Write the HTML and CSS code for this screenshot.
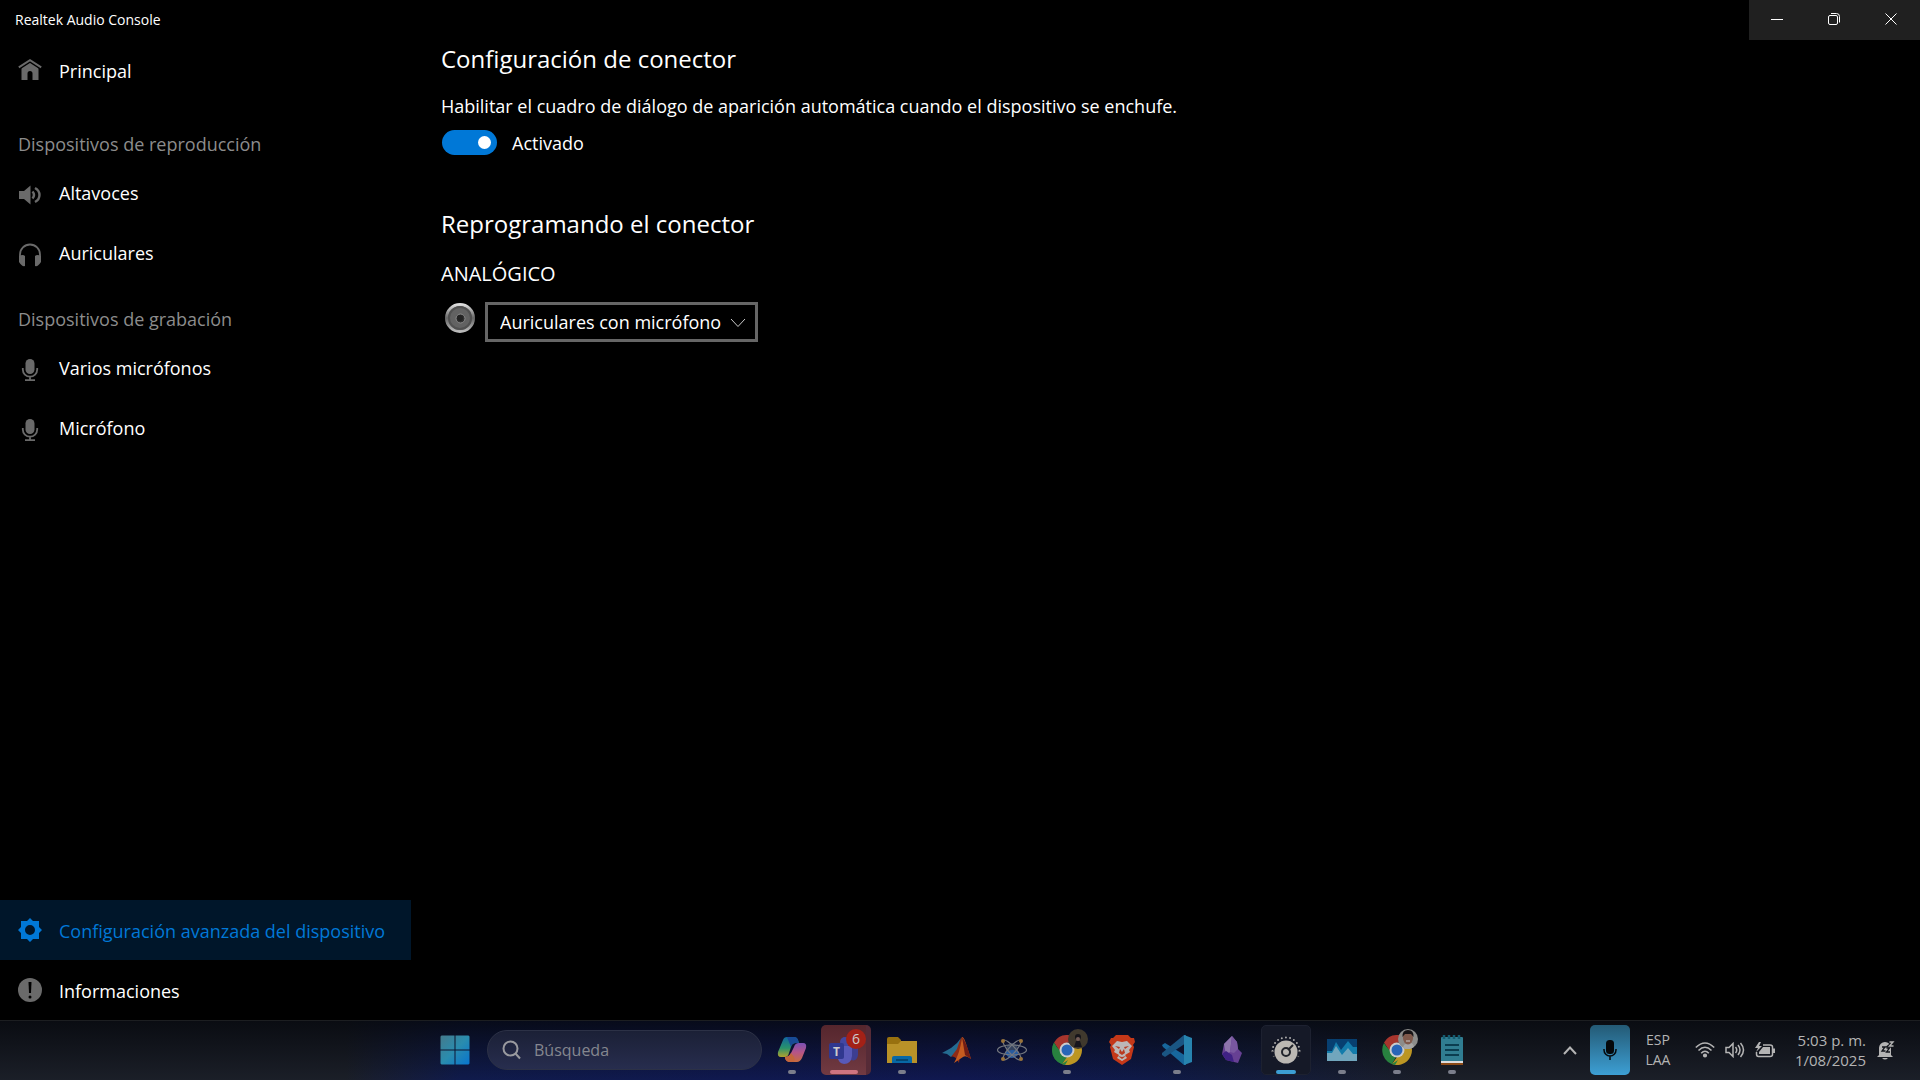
FILE: index.html
```html
<!DOCTYPE html>
<html lang="es">
<head>
<meta charset="utf-8">
<title>Realtek Audio Console</title>
<link rel="stylesheet" href="styles.css">
</head>
<body>
<div class="app">
  <header class="titlebar">
    <span class="titlebar-name">Realtek Audio Console</span>
    <div class="window-buttons">
      <button class="window-button" aria-label="Minimizar"><svg width="12" height="12" viewBox="0 0 12 12"><path d="M0 6.5H12" /></svg></button>
      <button class="window-button" aria-label="Restaurar"><svg width="12" height="12" viewBox="0 0 12 12"><rect x=".5" y="2.5" width="9" height="9" rx="1.5"/><path d="M3 .5H8.5A3 3 0 0 1 11.500 3.500V9.500"/></svg></button>
      <button class="window-button" aria-label="Cerrar"><svg width="12" height="12" viewBox="0 0 12 12"><path d="M.5 .5L11.500 11.500M11.500 .5L.5 11.500"/></svg></button>
    </div>
  </header>

  <div class="body">
    <nav class="sidebar">
      <a class="nav-item" href="#principal">
        <svg class="nav-icon" viewBox="0 0 24 24"><path d="M12 3.500L3.500 9.500V22H9.500V15.500A2.500 2.500 0 0 1 14.500 15.500V22H20.500V9.500Z" fill="currentColor"/><path d="M.8 9.800L12 2.500L23.200 9.800" fill="none" stroke="#000" stroke-width="4"/><path d="M.8 9.300L12 2.200L23.200 9.300" fill="none" stroke="currentColor" stroke-width="2"/></svg>
        <span>Principal</span>
      </a>
      <h2 class="nav-heading nav-heading-first">Dispositivos de reproducción</h2>
      <div class="devices">
        <a class="nav-item" href="#altavoces">
          <svg class="nav-icon" viewBox="0 0 24 24"><path d="M1 8H6L12.500 2.500V21.500L6 16H1Z" fill="currentColor"/><path d="M14.500 8.500Q17.500 12 14.500 15.500M17 5Q21.500 7.500 21.500 12T17 19" fill="none" stroke="currentColor" stroke-width="2.400"/></svg>
          <span>Altavoces</span>
        </a>
        <a class="nav-item" href="#auriculares">
          <svg class="nav-icon" viewBox="0 0 24 24"><path d="M2 18V11.500A10 10 0 0 1 22 11.500V18" fill="none" stroke="currentColor" stroke-width="1.800"/><path d="M1 13Q5 11 7 13V23Q4 24 1 19ZM23 13Q19 11 17 13V23Q20 24 23 19Z" fill="currentColor"/></svg>
          <span>Auriculares</span>
        </a>
      </div>
      <h2 class="nav-heading">Dispositivos de grabación</h2>
      <div class="devices">
        <a class="nav-item" href="#varios">
          <svg class="nav-icon" viewBox="0 0 24 24"><rect x="7.500" y="1" width="9" height="15" rx="4.500" fill="currentColor"/><path d="M4.800 10V11.500A7.200 7.200 0 0 0 19.200 11.500V10M12 18.500V22M7 22.200H17" fill="none" stroke="currentColor" stroke-width="1.800"/></svg>
          <span>Varios micrófonos</span>
        </a>
        <a class="nav-item" href="#microfono">
          <svg class="nav-icon" viewBox="0 0 24 24"><rect x="7.500" y="1" width="9" height="15" rx="4.500" fill="currentColor"/><path d="M4.800 10V11.500A7.200 7.200 0 0 0 19.200 11.500V10M12 18.500V22M7 22.200H17" fill="none" stroke="currentColor" stroke-width="1.800"/></svg>
          <span>Micrófono</span>
        </a>
      </div>
      <div class="nav-footer">
        <a class="nav-item nav-item-active" href="#avanzada" aria-current="page">
          <svg class="nav-icon" viewBox="0 0 24 24"><path fill-rule="evenodd" fill="currentColor" d="M12 0L15 3H21V9L24 12L21 15V21H15L12 24L9 21H3V15L0 12L3 9V3H9ZM12 7A5 5 0 1 0 12 17A5 5 0 1 0 12 7Z"/></svg>
          <span>Configuración avanzada del dispositivo</span>
        </a>
        <a class="nav-item" href="#informaciones">
          <svg class="nav-icon" viewBox="0 0 24 24"><circle cx="12" cy="12" r="12" fill="currentColor"/><path d="M10.500 4H13.500L13 15H11Z"/><circle cx="12" cy="19" r="1.500"/></svg>
          <span>Informaciones</span>
        </a>
      </div>
    </nav>

    <main class="content">
      <h1 class="section-title">Configuración de conector</h1>
      <p class="setting-text" id="popup-text">Habilitar el cuadro de diálogo de aparición automática cuando el dispositivo se enchufe.</p>
      <label class="toggle-row">
        <input class="toggle" type="checkbox" role="switch" aria-describedby="popup-text" checked>
        <span>Activado</span>
      </label>
      <h1 class="section-title section-title-next">Reprogramando el conector</h1>
      <label class="group-title" for="jack">ANALÓGICO</label>
      <div class="jack-row">
        <svg class="jack" viewBox="0 0 30 30">
          <defs><linearGradient id="rim" x1="0" y1="0" x2="0" y2="1"><stop offset="0" stop-color="#ddd"/><stop offset=".5" stop-color="#666"/><stop offset="1" stop-color="#bbb"/></linearGradient></defs>
          <circle cx="15" cy="15" r="13.500" fill="#626262" stroke="url(#rim)" stroke-width="3"/>
          <circle cx="15" cy="15" r="11" fill="none" stroke="#505050" stroke-width="2"/>
          <circle cx="15.500" cy="15.500" r="4.500" fill="#303030" stroke="#888" stroke-width="1"/>
          <circle cx="15" cy="15" r="3" fill="#222"/>
        </svg>
        <div class="select-box">
          <select class="select" id="jack"><option>Auriculares con micrófono</option></select>
          <svg class="select-arrow" width="16" height="10" viewBox="0 0 16 10"><path d="M1 1L8 8.500L15 1"/></svg>
        </div>
      </div>
    </main>
  </div>
</div>

<footer class="taskbar">
  <div></div>
  <div class="task-center">
    <button class="task" aria-label="Inicio"><svg width="30" height="30" viewBox="0 0 30 30">
      <defs><linearGradient id="win" x1="0" y1="0" x2="1" y2="1"><stop offset="0" stop-color="#447a8c"/><stop offset=".5" stop-color="#2a8cae"/><stop offset="1" stop-color="#0875cf"/></linearGradient></defs>
      <path fill="url(#win)" d="M1.500 .5H14.500V14.500H.5V1.500ZM15.500 .5H28.500L29.500 1.500V14.500H15.500ZM.5 15.500H14.500V29.500H1.500L.5 28.500ZM15.500 15.500H29.500V28.500L28.500 29.500H15.500Z"/></svg></button>
    <div class="search">
      <svg width="20" height="20" viewBox="0 0 20 20"><circle cx="8.500" cy="8.500" r="7"/><path d="M13.500 13.500L18 18.500"/></svg>
      <input class="search-input" type="search" placeholder="Búsqueda" aria-label="Búsqueda">
    </div>
    <button class="task task-open" aria-label="Copilot"><svg width="30" height="30" viewBox="0 0 30 30">
      <defs><linearGradient id="cp1" x1="0" y1="0" x2="0" y2="1"><stop offset="0" stop-color="#12679e"/><stop offset=".55" stop-color="#28926c"/><stop offset="1" stop-color="#b1a32d"/></linearGradient><linearGradient id="cp2" x1="0" y1="0" x2="0" y2="1"><stop offset="0" stop-color="#7a50b5"/><stop offset=".5" stop-color="#b65587"/><stop offset="1" stop-color="#c66b3f"/></linearGradient></defs>
      <path d="M6 5Q7 2 10 2H17Q20 2 21 5L22 8H19Q15 8 14 12L12 18Q11 22 8 22H4Q0 22 1 17Z" fill="url(#cp1)"/>
      <path d="M24 8H26Q30 8 29 13L25 23Q23 27 20 27H13Q9 27 8 23L8 22Q12 22 14 18L17 12Q18 8 22 8Z" fill="url(#cp2)"/><path d="M10 2H17Q20 2 21 5L22 8H19Q15 8 14 12Z" fill="#184b96"/><path d="M8 22Q12 22 14 18L17 22Q19 27 15 27H13Q9 27 8 23Z" fill="#c4663c"/></svg></button>
    <button class="task task-alert" aria-label="Teams, 6 avisos"><svg width="32" height="30" viewBox="0 0 32 30">
      <circle cx="17" cy="7" r="5" fill="#4347a2"/><path d="M10 11H30V20Q29 27 23 25H10Z" fill="#3d3e91"/><path d="M10 11H24V21Q23 29 16 29Q10 28 10 22Z" fill="#5859b8"/><rect x="1" y="8" width="15" height="16" rx="2" fill="#30388f"/><text x="5" y="21" class="teams-letter">T</text></svg><span class="badge">6</span></button>
    <button class="task task-open" aria-label="Explorador de archivos"><svg width="30" height="30" viewBox="0 0 30 30"><path d="M0 4Q0 2 2 2H11L14 5V10H0Z" fill="#98710f"/><path d="M0 9H11L14 6H30V28H0Z" fill="#b99228"/><path d="M5 28V23Q5 21 7 21H23Q25 21 25 23V28Z" fill="#0868a5"/><path d="M9 25H21" stroke="#033c62" stroke-width="1.500"/></svg></button>
    <button class="task" aria-label="MATLAB"><svg width="30" height="30" viewBox="0 0 30 30"><path d="M0 18L9 13L15 8L19 3L16 15L9 22L5 19Z" fill="#246b91"/><path d="M9 22L15 14Q18 4 20 2L17 28Q13 20 9 22Z" fill="#8e2b16"/><path d="M20 2Q22 1 25 12L29 24Q24 20 21 22L12 28Q18 18 20 2Z" fill="#c65c20"/><path d="M20 2Q24 6 29 24L23 20Z" fill="#711d14"/></svg></button>
    <button class="task" aria-label="Átomo"><svg width="32" height="30" viewBox="0 0 32 30"><circle cx="16" cy="14" r="6" fill="#34435f"/><path d="M9 17Q16 13 23 17Q21 23 16 23T9 17" fill="#285ca0"/><g fill="none" stroke="#74787f" stroke-width="1.200"><ellipse cx="16" cy="15" rx="14.500" ry="5"/><ellipse cx="16" cy="15" rx="13" ry="3.500" transform="rotate(48 16 15)"/><ellipse cx="16" cy="15" rx="13" ry="3.500" transform="rotate(-48 16 15)"/></g><g fill="#99733a"><circle cx="7" cy="6" r="2"/><circle cx="25" cy="6" r="2"/><circle cx="7" cy="24" r="2"/><circle cx="25" cy="24" r="2"/></g></svg></button>
    <button class="task task-open" aria-label="Chrome"><svg width="30" height="30" viewBox="0 0 30 30"><path d="M2 7.500A15 15 0 0 1 28 7.500H15L9 18Z" fill="#a7352d"/><path d="M2 7.500L8.500 18.700L15 22.500H15L10 29Q0 25 0 15Q0 11 2 7.500Z" fill="#28813f"/><path d="M28 7.500Q30 11 30 15A15 15 0 0 1 13.500 30L10 29L15 22L21.500 18.500L21 7.500Z" fill="#bc9623"/><path d="M10 29L15 20L9 17L4 11L2 8Q-1 13 1 20Q4 28 13 30L16 25Z" fill="#28813f"/><circle cx="15" cy="15" r="7.500" fill="#ccc"/><circle cx="15" cy="15" r="5.500" fill="#2965b8"/></svg>
      <svg class="profile" viewBox="0 0 20 20"><circle cx="10" cy="10" r="10" fill="#40392d"/><circle cx="10" cy="8" r="3" fill="#15141a"/><circle cx="10" cy="10" r="2" fill="#745c57"/><path d="M6 18L8 12H12L14 18Z" fill="#17161d"/></svg></button>
    <button class="task" aria-label="Brave"><svg width="30" height="30" viewBox="0 0 30 30"><path d="M9 0H21L24 3L27 3L28 7L26 10L27 12L24 24L15 30L6 24L3 12L4 10L2 7L4 3L6 3Z" fill="#c43818"/><path d="M10 6L15 7L20 6L25 11L22 15L23 17L18 20L20 23L15 26L10 23L12 20L7 17L8 15L5 11Z" fill="#bcb7b6"/><path d="M8 11L13 12L12 14ZM22 11L17 12L18 14ZM13 14L12 18L15 20L18 18L17 14L15 17ZM11 21L15 22L19 21L15 24Z" fill="#b83b20"/></svg></button>
    <button class="task task-open" aria-label="Visual Studio Code"><svg width="30" height="30" viewBox="0 0 30 30"><path d="M3 8L0 10L1 12L22 30H24V21Z" fill="#17679c"/><path d="M3 22L0 20V18L22 0H24V8Z" fill="#1a5683"/><path d="M22 0L30 3V27L22 30Z" fill="#2784af"/></svg></button>
    <button class="task" aria-label="Obsidian"><svg width="30" height="30" viewBox="0 0 30 30"><path d="M7 9L15 1L20 7L21 14L25 18L21 28L9 25L5 19Z" fill="#674093"/><path d="M7 9L15 1L13 17L9 20Z" fill="#8d74ab"/><path d="M15 1L20 7L21 14L17 18L13 17Z" fill="#7957a0"/><path d="M5 19L9 16L15 20L17 27L9 25Z" fill="#3f2184"/></svg></button>
    <button class="task task-current" aria-label="Realtek Audio Console"><svg width="32" height="30" viewBox="0 0 32 30"><path d="M2.500 16A13.500 13.500 0 1 1 29.500 16" fill="none" stroke="#aaa" stroke-width="2" stroke-linecap="round" stroke-dasharray="0 4.200"/><path d="M2.500 16Q3 21 6 25M29.500 16Q29 21 26 25" fill="none" stroke="#666" stroke-width="2" stroke-dasharray="1 4"/><circle cx="16" cy="17" r="11.500" fill="#bbb8b3"/><circle cx="16" cy="17" r="4" fill="none" stroke="#22252c" stroke-width="2"/><path d="M18 15L23 10" stroke="#22252c" stroke-width="2"/></svg></button>
    <button class="task task-open" aria-label="Monitor"><svg width="30" height="30" viewBox="0 0 30 30"><path d="M0 4H30V26H0Z" fill="#073f70"/><path d="M0 16L5 16L9 7L14 15L21 6L26 12H30V26H0Z" fill="#137cab"/><path d="M0 18H5L9 11L15 20L21 13L26 19H30V26H0Z" fill="#71a6bd"/></svg></button>
    <button class="task task-open" aria-label="Chrome, segundo perfil"><svg width="30" height="30" viewBox="0 0 30 30"><path d="M2 7.500A15 15 0 0 1 28 7.500H15L9 18Z" fill="#a7352d"/><path d="M28 7.500Q30 11 30 15A15 15 0 0 1 13.500 30L10 29L15 22L21.500 18.500L21 7.500Z" fill="#bc9623"/><path d="M10 29L15 20L9 17L4 11L2 8Q-1 13 1 20Q4 28 13 30L16 25Z" fill="#28813f"/><circle cx="15" cy="15" r="7.500" fill="#ccc"/><circle cx="15" cy="15" r="5.500" fill="#2965b8"/></svg>
      <svg class="profile" viewBox="0 0 20 20"><circle cx="10" cy="10" r="10" fill="#8c8c8a"/><path d="M5 19Q5 15 10 14T16 18Q10 22 5 19Z" fill="#a5a5a5"/><ellipse cx="10" cy="9" rx="5" ry="6.500" fill="#80594b"/><path d="M4.500 8Q4 1 10 1T15.500 8L13 5H7Z" fill="#171315"/><path d="M8 12H12" stroke="#ccc"/></svg></button>
    <button class="task task-open" aria-label="Bloc de notas"><svg width="30" height="30" viewBox="0 0 30 30"><rect x="4" y="2" width="22" height="28" rx="1" fill="#307d91"/><path d="M4 27H26" stroke="#ddd" stroke-width="2"/><path d="M4 29H26" stroke="#8b4a16" stroke-width="2"/><path d="M8 10H22M8 15H22M8 20H22" stroke="#0b3d50" stroke-width="2"/><path d="M7 0V4M12 0V4M17 0V4M22 0V4" stroke="#145c70" stroke-width="2.500"/></svg></button>
  </div>

  <div class="tray">
    <button class="tray-button" aria-label="Mostrar iconos ocultos"><svg width="14" height="9" viewBox="0 0 14 9"><path d="M1 8L7 1.500L13 8" fill="none" stroke="currentColor" stroke-width="2"/></svg></button>
    <button class="mic-button" aria-label="Micrófono en uso"><svg width="14" height="20" viewBox="0 0 14 20"><rect x="3" y="0" width="8" height="14" rx="3.500" fill="#05080b"/><path d="M1 9V10A6 6 0 0 0 13 10V9M7 16V20" fill="none" stroke="#05080b" stroke-width="1.500"/></svg></button>
    <button class="language"><span>ESP</span><span>LAA</span></button>
    <button class="status" aria-label="Red, volumen y batería">
      <svg width="20" height="16" viewBox="0 0 20 16" fill="none" stroke="currentColor" stroke-width="1.600"><path d="M.8 5.500Q10 -3.500 19.200 5.500M3.500 8.500Q10 2 16.500 8.500M6.200 11.300Q10 7.300 13.800 11.300"/><circle cx="10" cy="13.500" r="1.300" fill="currentColor"/></svg>
      <svg width="20" height="16" viewBox="0 0 20 16" fill="none" stroke="currentColor" stroke-width="1.500"><path d="M1 5.500H4L8 1.500V14.500L4 10.500H1ZM10.500 5Q13 8 10.500 11M13 3Q17 8 13 13M15.500 1Q21.500 8 15.500 15"/></svg>
      <svg width="20" height="16" viewBox="0 0 20 16" fill="none" stroke="currentColor" stroke-width="1.500"><path d="M8 3H15Q17.500 3 17.500 5V12.500Q17.500 14.500 15 14.500H3.500Q1.500 14.500 1.500 12V10"/><path d="M19 6.500V11" stroke-width="2"/><path d="M4 12V10L8 5H15V12Z M4 0L0 6H3L1 10L7 4H4L6 0Z" fill="currentColor" stroke="none"/></svg>
    </button>
    <button class="clock"><span>5:03 p. m.</span><span>1/08/2025</span></button>
    <button class="tray-button" aria-label="Notificaciones"><svg width="18" height="19" viewBox="0 0 18 19"><path d="M2 14V7A6 6 0 0 1 14 7V14L16 16H0Z M5 17H11Q8 20 5 17Z" fill="currentColor"/><path d="M5 6H8L5 10H8.500M9.500 7H12.500L9.500 11H13" fill="none" stroke="#12151b" stroke-width="1.300"/><path d="M12 1H17L12 5H17" fill="none" stroke="#12151b" stroke-width="3"/><path d="M12.500 1H16L12.500 5H16.500" fill="none" stroke="currentColor" stroke-width="1.400"/></svg></button>
  </div>
</footer>
</body>
</html>
```
FILE: styles.css
```css
* { box-sizing: border-box; }

body {
  margin: 0;
  min-height: 100vh;
  display: flex;
  flex-direction: column;
  background: #000;
  color: #fff;
  font-family: "Open Sans", "Noto Sans", sans-serif;
  font-size: 18px;
  line-height: 24px;
}

button, input, select { font: inherit; color: inherit; }
button { padding: 0; border: 0; background: none; }
a { color: inherit; text-decoration: none; }
h1, h2, p { margin: 0; font-weight: 400; }
svg { flex: none; }

.app { flex: 1; display: flex; flex-direction: column; }

/* Title bar */
.titlebar { display: flex; justify-content: space-between; height: 40px; }
.titlebar-name { padding: 8px 15px; font-size: 14px; }
.window-buttons { display: flex; background: #202020; }
.window-button { width: 57px; display: grid; place-items: center; padding: 0 2px 2px 0; }
.window-button svg { fill: none; stroke: #fff; stroke-width: 1; }

.body { flex: 1; display: flex; }

/* Navigation */
.sidebar { width: 411px; flex: none; display: flex; flex-direction: column; }
.nav-item { display: flex; align-items: center; gap: 17px; height: 60px; padding-left: 18px; }
.nav-item span { padding-top: 2px; }
.nav-icon { width: 24px; height: 24px; color: #6a6a6a; }
.nav-heading { height: 55px; padding: 22px 18px 0; font-size: 18px; color: #8c8c8c; }
.nav-heading-first { height: 65px; padding-top: 32px; }
.devices span { padding: 0 0 4px; }
.nav-footer { margin-top: auto; }
.nav-item-active { background: #00162a; color: #0078d7; }
.nav-item-active .nav-icon { color: #0078d7; }

/* Settings */
.content { flex: 1; padding: 1px 30px; display: flex; flex-direction: column; align-items: flex-start; }
.section-title { font-size: 24px; line-height: 36px; }
.section-title-next { margin-top: 51px; }
.setting-text { margin-top: 17px; }
.toggle-row { margin-top: 12px; display: flex; align-items: center; gap: 15px; padding-left: 1px; }
.toggle {
  appearance: none;
  width: 55px;
  height: 25px;
  margin: 0;
  padding: 6px;
  border-radius: 13px;
  background: #0078d7;
  display: flex;
  justify-content: flex-end;
}
.toggle::before { content: ""; width: 13px; height: 13px; border-radius: 50%; background: #fff; }
.toggle:not(:checked) { background: #555; justify-content: flex-start; }
.group-title { margin-top: 20px; font-size: 20px; }
.jack-row { display: flex; gap: 10px; margin-top: 16px; padding-left: 4px; }
.jack { width: 30px; height: 30px; margin-top: 1px; }
.select-box { position: relative; }
.select {
  appearance: none;
  height: 40px;
  width: 273px;
  padding: 0 12px;
  border: 3px solid #666;
  border-radius: 0;
  background: #000;
}
.select-arrow { position: absolute; right: 12px; top: 16px; fill: none; stroke: #ccc; pointer-events: none; }

/* Taskbar */
.taskbar {
  height: 60px;
  padding-right: 14px;
  display: grid;
  grid-template-columns: 1fr auto 1fr;
  align-items: center;
  box-shadow: inset 0 1px #1c1e21;
  background:
    linear-gradient(180deg, rgba(5, 7, 12, .8), rgba(5, 7, 12, 0)),
    linear-gradient(90deg, rgba(15, 25, 90, 0) 18%, #101b4c 24%, #10194f 38%, #101850 50%, #0f1a48 60%, rgba(15, 25, 70, 0) 75%),
    #1b1f28;
}
.task-center { display: flex; align-items: center; }
.task { position: relative; width: 55px; height: 50px; display: grid; place-items: center; }
.search {
  width: 275px;
  height: 40px;
  margin: 0 2px 0 5px;
  padding: 0 14px;
  display: flex;
  align-items: center;
  gap: 12px;
  border: 1px solid #2c3146;
  border-radius: 20px;
  background: linear-gradient(180deg, #1b2036, #272d4e);
}
.search svg { fill: none; stroke: #999a9f; stroke-width: 2; }
.search-input { min-width: 0; flex: 1; padding: 0; border: 0; outline: 0; background: none; font-size: 16px; }
.search-input::placeholder { color: #85878f; opacity: 1; }

.task-open::after, .task-current::after, .task-alert::after {
  content: "";
  position: absolute;
  bottom: 1px;
  left: 50%;
  width: 8px;
  height: 4px;
  border-radius: 2px;
  background: #7b7e8b;
  transform: translateX(-50%);
}
.task-current, .task-alert { width: 50px; margin: 0 3px 0 2px; border-radius: 5px; }
.task-current { background: #151927; border: 1px solid #1d2130; }
.task-current::after { width: 20px; bottom: 0; background: #3c9ed3; }
.task-alert { background: linear-gradient(180deg, #55262d, #713a42); border-right: 5px solid #562b37; }
.task-alert::after { width: 28px; background: #cf7480; }
.teams-letter { font-size: 12px; font-weight: 700; fill: #ccc; }
.badge {
  position: absolute;
  top: 4px;
  right: 0;
  width: 20px;
  height: 20px;
  border-radius: 50%;
  background: #a32117;
  color: #ccc;
  font-size: 14px;
  line-height: 20px;
}
.profile { position: absolute; top: 4px; right: 6px; width: 20px; height: 20px; }

.tray {
  justify-self: end;
  display: flex;
  align-items: center;
  color: #b4b4b4;
  font-size: 15px;
  line-height: 20px;
}
.tray-button { display: grid; place-items: center; width: 40px; height: 50px; }
.mic-button {
  width: 40px;
  height: 50px;
  display: grid;
  place-items: center;
  border-radius: 5px;
  background: linear-gradient(180deg, #245a75, #3d9fd4);
}
.language { width: 56px; display: flex; flex-direction: column; align-items: center; font-size: 14px; }
.status { display: flex; gap: 10px; margin-left: 9px; }
.clock { margin-left: 20px; display: flex; flex-direction: column; align-items: flex-end; }
```
